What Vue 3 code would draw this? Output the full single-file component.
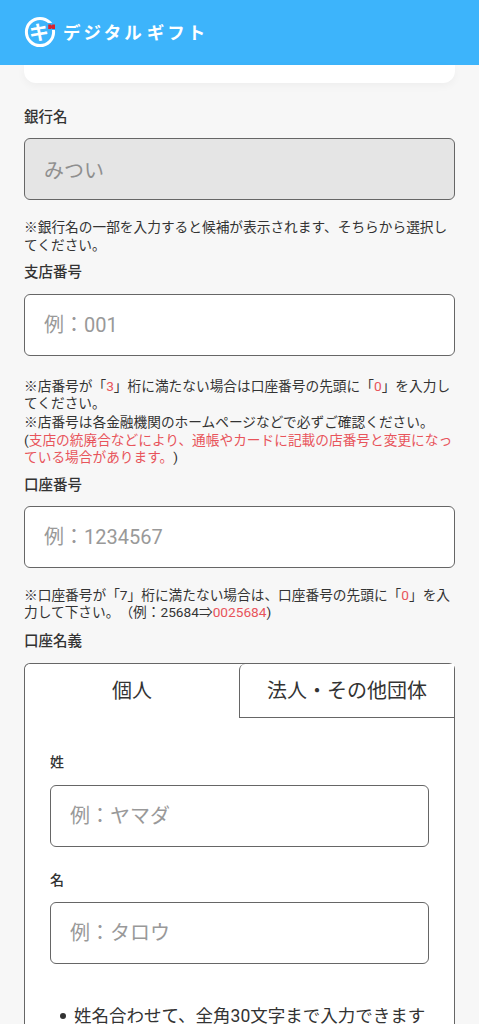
<script setup>
const sections = {
  shop: '例：001',
  account: '例：1234567',
  sei: '例：ヤマダ',
  mei: '例：タロウ',
}
</script>

<template>
  <div class="page">
    <header class="header">
      <svg class="mark" viewBox="0 0 32 32" width="32" height="32" aria-hidden="true">
        <circle cx="16" cy="16" r="13.6" fill="none" stroke="#fff" stroke-width="3" />
        <text class="mark-letter" x="15" y="23.5" text-anchor="middle">キ</text>
        <path d="M21.5 7 H31.5 V14 H24 Z" fill="#3db4fb" />
        <path d="M24.2 8.6 h2.9 l0.6 1.1 l0.6 -1.1 h2.7 v4.4 h-2.7 l-0.6 -1.1 l-0.6 1.1 h-2.9z" fill="#d9222e" />
      </svg>
      <span class="brand">デジタル<span class="brand-gap">ギフト</span></span>
    </header>

    <main class="content">
      <div class="top-card"></div>

      <label class="label first">銀行名</label>
      <input class="field filled" value="みつい" disabled />
      <p class="note n1">※銀行名の一部を入力すると候補が表示されます、そちらから選択してください。</p>

      <label class="label l2">支店番号</label>
      <input class="field" :placeholder="sections.shop" />
      <p class="note n1b">※店番号が「<em>3</em>」桁に満たない場合は口座番号の先頭に「<em>0</em>」を入力してください。</p>
      <p class="note n2">※店番号は各金融機関のホームページなどで必ずご確認ください。<br />(<em>支店の統廃合などにより、通帳やカードに記載の店番号と変更になっている場合があります。</em>)</p>

      <label class="label l3">口座番号</label>
      <input class="field" :placeholder="sections.account" />
      <p class="note n1">※口座番号が「7」桁に満たない場合は、口座番号の先頭に「<em>0</em>」を入力して下さい。（例：25684⇒<em>0025684</em>)</p>

      <label class="label l4">口座名義</label>
      <section class="tabs">
        <div class="tab-row">
          <div class="tab active">個人</div>
          <div class="tab">法人・その他団体</div>
        </div>
        <div class="tab-body">
          <label class="label sub">姓</label>
          <input class="field" :placeholder="sections.sei" />
          <label class="label sub second">名</label>
          <input class="field" :placeholder="sections.mei" />
          <ul class="rules">
            <li>姓名合わせて、全角30文字まで入力できます</li>
          </ul>
        </div>
      </section>
    </main>
  </div>
</template>

<style>
html, body { margin: 0; background: #f7f7f7; }
</style>

<style scoped>
.page {
  height: 1024px;
  overflow: hidden;
  background: #f7f7f7;
  color: #333;
  font-family: Roboto, "Noto Sans CJK JP", "Noto Sans", sans-serif;
  text-spacing-trim: space-all;
}
.header {
  height: 65px;
  box-sizing: border-box;
  background: #3db4fb;
  display: flex;
  align-items: center;
  padding: 0 24px 1px;
  gap: 7px;
}
.mark { flex: none; }
.mark-letter {
  fill: #fff;
  font-size: 20px;
  font-weight: 700;
  font-family: "Noto Sans CJK JP", sans-serif;
}
.brand {
  color: #fff;
  font-size: 17.5px;
  font-weight: 700;
  letter-spacing: 3px;
  line-height: 1;
  padding-top: 3px;
}
.brand-gap { margin-left: 2px; }
.content { padding: 0 24px; }
.top-card {
  height: 18px;
  background: #fff;
  border-radius: 0 0 12px 12px;
  box-shadow: 0 3px 8px rgba(0, 0, 0, 0.04);
}
.label {
  display: block;
  font-size: 14.5px;
  font-weight: 500;
  line-height: 20px;
  color: #333;
  margin-bottom: 11px;
}
.first { margin-top: 25px; margin-bottom: 10px; }
.l2 { margin-top: 9px; }
.l3 { margin-top: 9px; margin-bottom: 10px; }
.l4 { margin-top: 10px; margin-bottom: 11px; }
.field {
  display: block;
  width: 100%;
  height: 62px;
  box-sizing: border-box;
  padding: 0 19px;
  border: 1px solid #666;
  border-radius: 6px;
  background: #fff;
  font-family: inherit;
  font-size: 20px;
  color: #333;
  outline: none;
}
.field::placeholder { color: #999; opacity: 1; }
.filled, .filled:disabled {
  background: #e5e5e5;
  color: #8f8f8f;
  -webkit-text-fill-color: #8f8f8f;
  opacity: 1;
}
.note {
  margin: 0;
  font-size: 13.7px;
  line-height: 17.5px;
  color: #333;
}
.n1 { margin-top: 19px; }
.n1b { margin-top: 21.5px; }
.n2 { margin-top: 1.5px; }
.note em { font-style: normal; color: #e8545b; }
.tabs {
  border: 1px solid #666;
  border-bottom: 0;
  border-radius: 6px 6px 0 0;
  background: #fff;
}
.tab-row { display: grid; grid-template-columns: 214px 1fr; height: 54px; }
.tab {
  display: flex;
  align-items: center;
  justify-content: center;
  padding-bottom: 2px;
  box-sizing: border-box;
  font-size: 20px;
  color: #333;
  background: #fff;
  border-left: 1px solid #666;
  border-bottom: 1px solid #666;
  border-radius: 6px 0 0 0;
}
.tab.active { border: 0; }
.tab-body { padding: 34px 25px 0; }
.sub { font-size: 14px; margin-bottom: 13px; }
.second { margin-top: 23px; margin-bottom: 12px; }
.rules {
  list-style: none;
  margin: 39px 0 0;
  padding: 0;
  font-size: 17.5px;
  line-height: 26px;
}
.rules li {
  display: flex;
  align-items: center;
  gap: 8px;
}
.rules li::before {
  content: "";
  flex: none;
  width: 6px;
  height: 6px;
  margin-left: 10px;
  border-radius: 50%;
  background: #333;
}
</style>
